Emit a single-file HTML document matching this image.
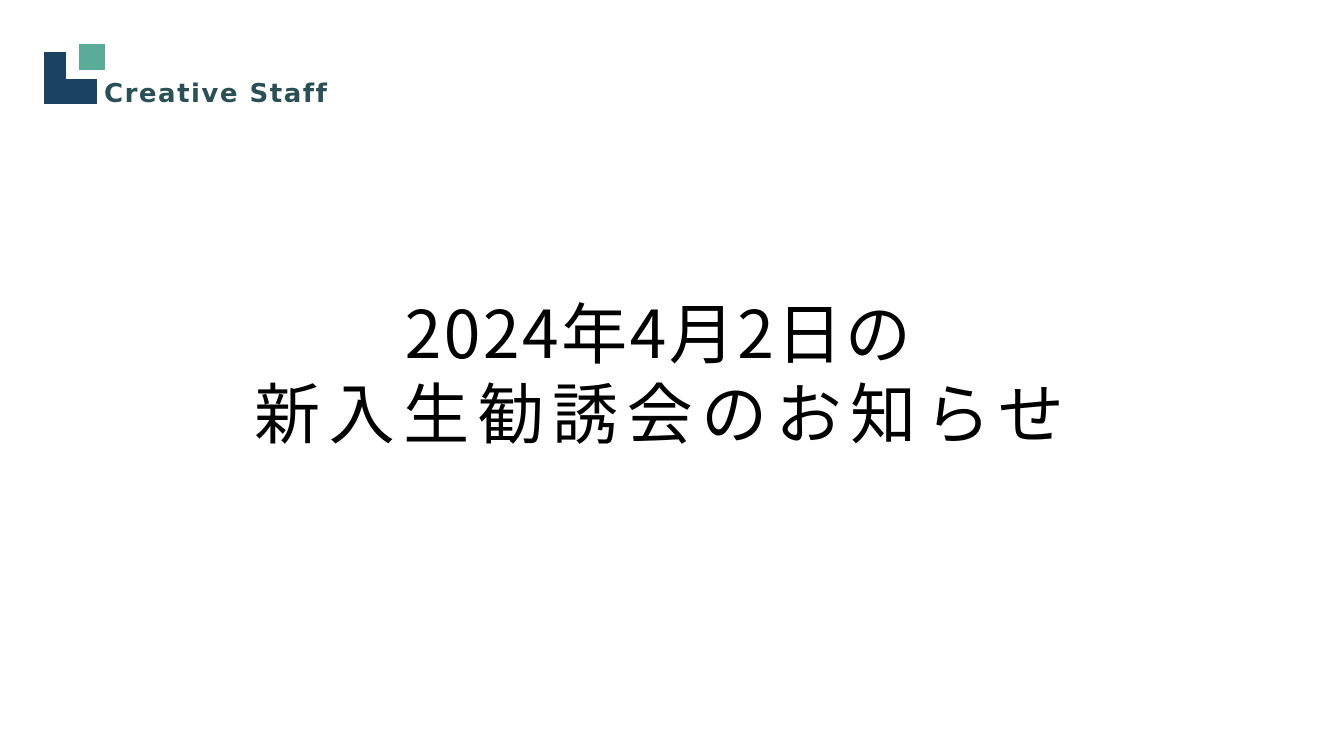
<!DOCTYPE html>
<html><head><meta charset="utf-8"><style>
html,body{margin:0;padding:0;background:#fff;}
body{width:1318px;height:741px;position:relative;overflow:hidden;}
.b{position:absolute;}
.t{position:absolute;left:0;width:1318px;text-align:center;font-family:"Liberation Sans","Noto Sans CJK JP",sans-serif;color:#000;font-size:66px;line-height:1;white-space:nowrap;}
</style></head><body>
<div class="b" style="left:44px;top:52px;width:22px;height:52px;background:#1b4262"></div>
<div class="b" style="left:44px;top:79px;width:53px;height:25px;background:#1b4262"></div>
<div class="b" style="left:79px;top:44px;width:26px;height:26px;background:#5aab98"></div>
<div class="b" style="left:104px;top:81px;font-family:'DejaVu Sans','Liberation Sans',sans-serif;font-size:26px;font-weight:bold;color:#2a4f55;letter-spacing:1.5px;line-height:1;">Creative Staff</div>
<div class="t" style="top:297px;letter-spacing:2.5px;font-family:'Noto Sans CJK JP',sans-serif;">2024年4月2日の</div>
<div class="t" style="top:377px;letter-spacing:8.5px;text-indent:8.5px;font-family:'Noto Sans CJK JP',sans-serif;">新入生勧誘会のお知らせ</div>
</body></html>
